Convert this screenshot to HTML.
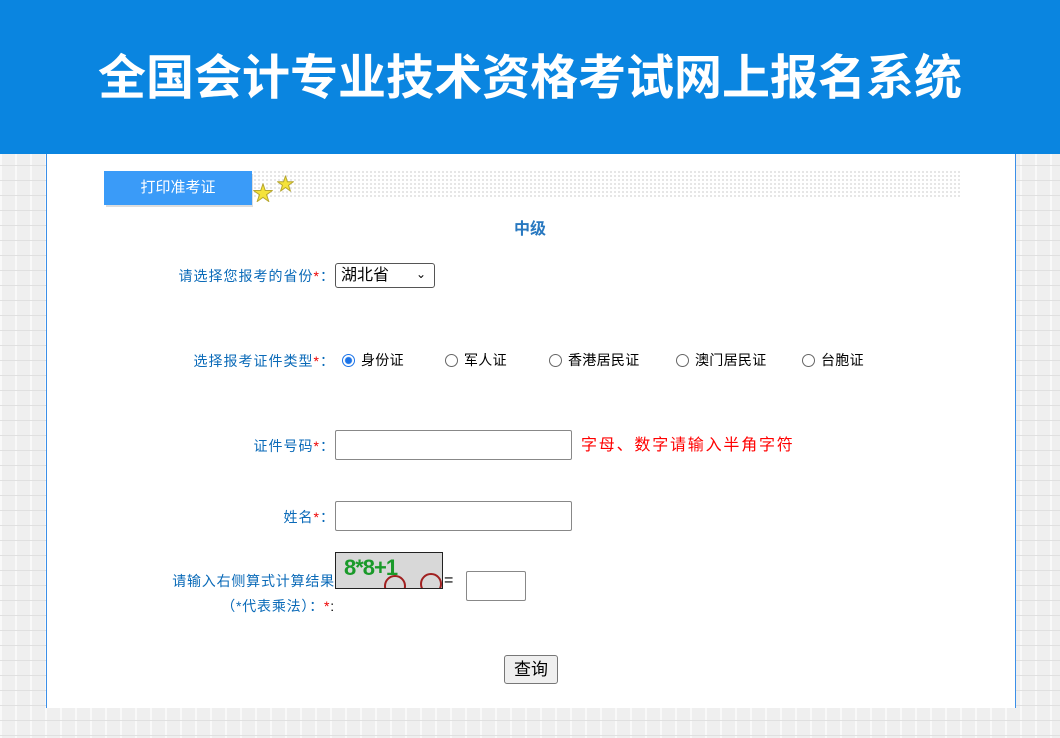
<!DOCTYPE html>
<html><head><meta charset="utf-8"><style>
*{margin:0;padding:0;box-sizing:border-box}
body{width:1060px;height:738px;overflow:hidden;position:relative;font-family:"Liberation Sans","Noto Sans CJK SC",sans-serif;font-size:14px;
background-color:#efefef;
background-image:linear-gradient(#e0e0e0 1px,transparent 1px),linear-gradient(90deg,#f9f9f9 2px,transparent 2px);
background-size:15px 15px;}
.hd{position:absolute;left:0;top:0;width:1060px;height:154px;background:#0a85e0;color:#fff;font-size:48px;font-weight:bold;text-align:center;line-height:146px;font-family:"Noto Sans CJK SC",sans-serif;letter-spacing:0}
.panel{position:absolute;left:46px;top:154px;width:970px;height:554px;background:#fff;border-left:1px solid #3b8fe8;border-right:1px solid #3b8fe8}
.abs{position:absolute}
.lbl{color:#0a6ab8;font-size:14px;position:absolute;text-align:right;letter-spacing:1px}
.r{color:#e00}
input[type=text]{position:absolute;border:1px solid #888;border-radius:2px;height:30px;background:#fff}
.rad{position:absolute;font-size:14px;color:#000;display:flex;align-items:center;letter-spacing:0.3px}
.rad i{display:inline-block;width:13px;height:13px;border:1px solid #666;border-radius:50%;margin-right:6px;background:#fff}
</style></head><body>
<div class="hd">全国会计专业技术资格考试网上报名系统</div>
<div class="panel"></div>
<div class="abs" style="left:253px;top:170px;width:707px;height:29px;background-image:radial-gradient(#ddd 0.8px,transparent 1px);background-size:4px 4px"></div>
<div class="abs" style="left:106px;top:174px;width:147px;height:33px;background:#ddd"></div>
<div class="abs" style="left:104px;top:171px;width:148px;height:34px;background:#3a9bf8;color:#fff;font-size:15px;text-align:center;line-height:34px">打印准考证</div>
<div class="abs" style="left:253px;top:177px;color:#f5e33a;font-size:20px;-webkit-text-stroke:1px #b8a830">★</div>
<div class="abs" style="left:277px;top:170px;color:#f5e33a;font-size:17px;-webkit-text-stroke:1px #b8a830">★</div>
<div class="abs" style="left:0;width:1060px;top:215px;text-align:center;color:#2878c0;font-weight:bold;font-size:16px">中级</div>

<div class="lbl" style="right:725px;top:266px">请选择您报考的省份<span class="r">*</span>：</div>
<div class="abs" style="left:335px;top:263px;width:100px;height:25px;border:1px solid #555;border-radius:3px;font-size:16px;padding-left:5px;line-height:23px">湖北省<span style="position:absolute;right:8px;top:-1px;font-size:12px">&#8964;</span></div>

<div class="lbl" style="right:725px;top:351px">选择报考证件类型<span class="r">*</span>：</div>
<div class="rad" style="left:342px;top:350px"><i style="border-color:#1a73e8;background:radial-gradient(#1a73e8 3px,#fff 4px)"></i>身份证</div>
<div class="rad" style="left:445px;top:350px"><i></i>军人证</div>
<div class="rad" style="left:549px;top:350px"><i></i>香港居民证</div>
<div class="rad" style="left:676px;top:350px"><i></i>澳门居民证</div>
<div class="rad" style="left:802px;top:350px"><i></i>台胞证</div>

<div class="lbl" style="right:725px;top:436px">证件号码<span class="r">*</span>：</div>
<input type="text" style="left:335px;top:430px;width:237px">
<div class="abs" style="left:581px;top:431px;color:#f00;font-size:16px;letter-spacing:1.8px">字母、数字请输入半角字符</div>

<div class="lbl" style="right:725px;top:507px">姓名<span class="r">*</span>：</div>
<input type="text" style="left:335px;top:501px;width:237px">

<div class="lbl" style="left:150px;width:185px;top:569px;line-height:25px;text-align:right;letter-spacing:0.8px">请输入右侧算式计算结果<br>（*代表乘法）：<span class="r">*</span><span style="color:#000">:</span></div>
<div class="abs" style="left:335px;top:552px;width:108px;height:37px;background:#d8d8d8;border:1px solid #222;overflow:hidden">
<div style="position:absolute;left:8px;top:2px;color:#1a9a2a;font-weight:bold;font-size:22px;letter-spacing:-1px">8*8+1</div>
<div style="position:absolute;left:48px;top:22px;width:22px;height:22px;border:2px solid #a02020;border-radius:50%"></div>
<div style="position:absolute;left:84px;top:20px;width:22px;height:22px;border:2px solid #a02020;border-radius:50%"></div>
</div>
<div class="abs" style="left:444px;top:572px;font-size:16px">=</div>
<input type="text" style="left:466px;top:571px;width:60px">
<div class="abs" style="left:504px;top:655px;width:54px;height:29px;border:1px solid #777;border-radius:3px;background:#efefef;font-size:17px;text-align:center;line-height:27px">查询</div>
</body></html>
